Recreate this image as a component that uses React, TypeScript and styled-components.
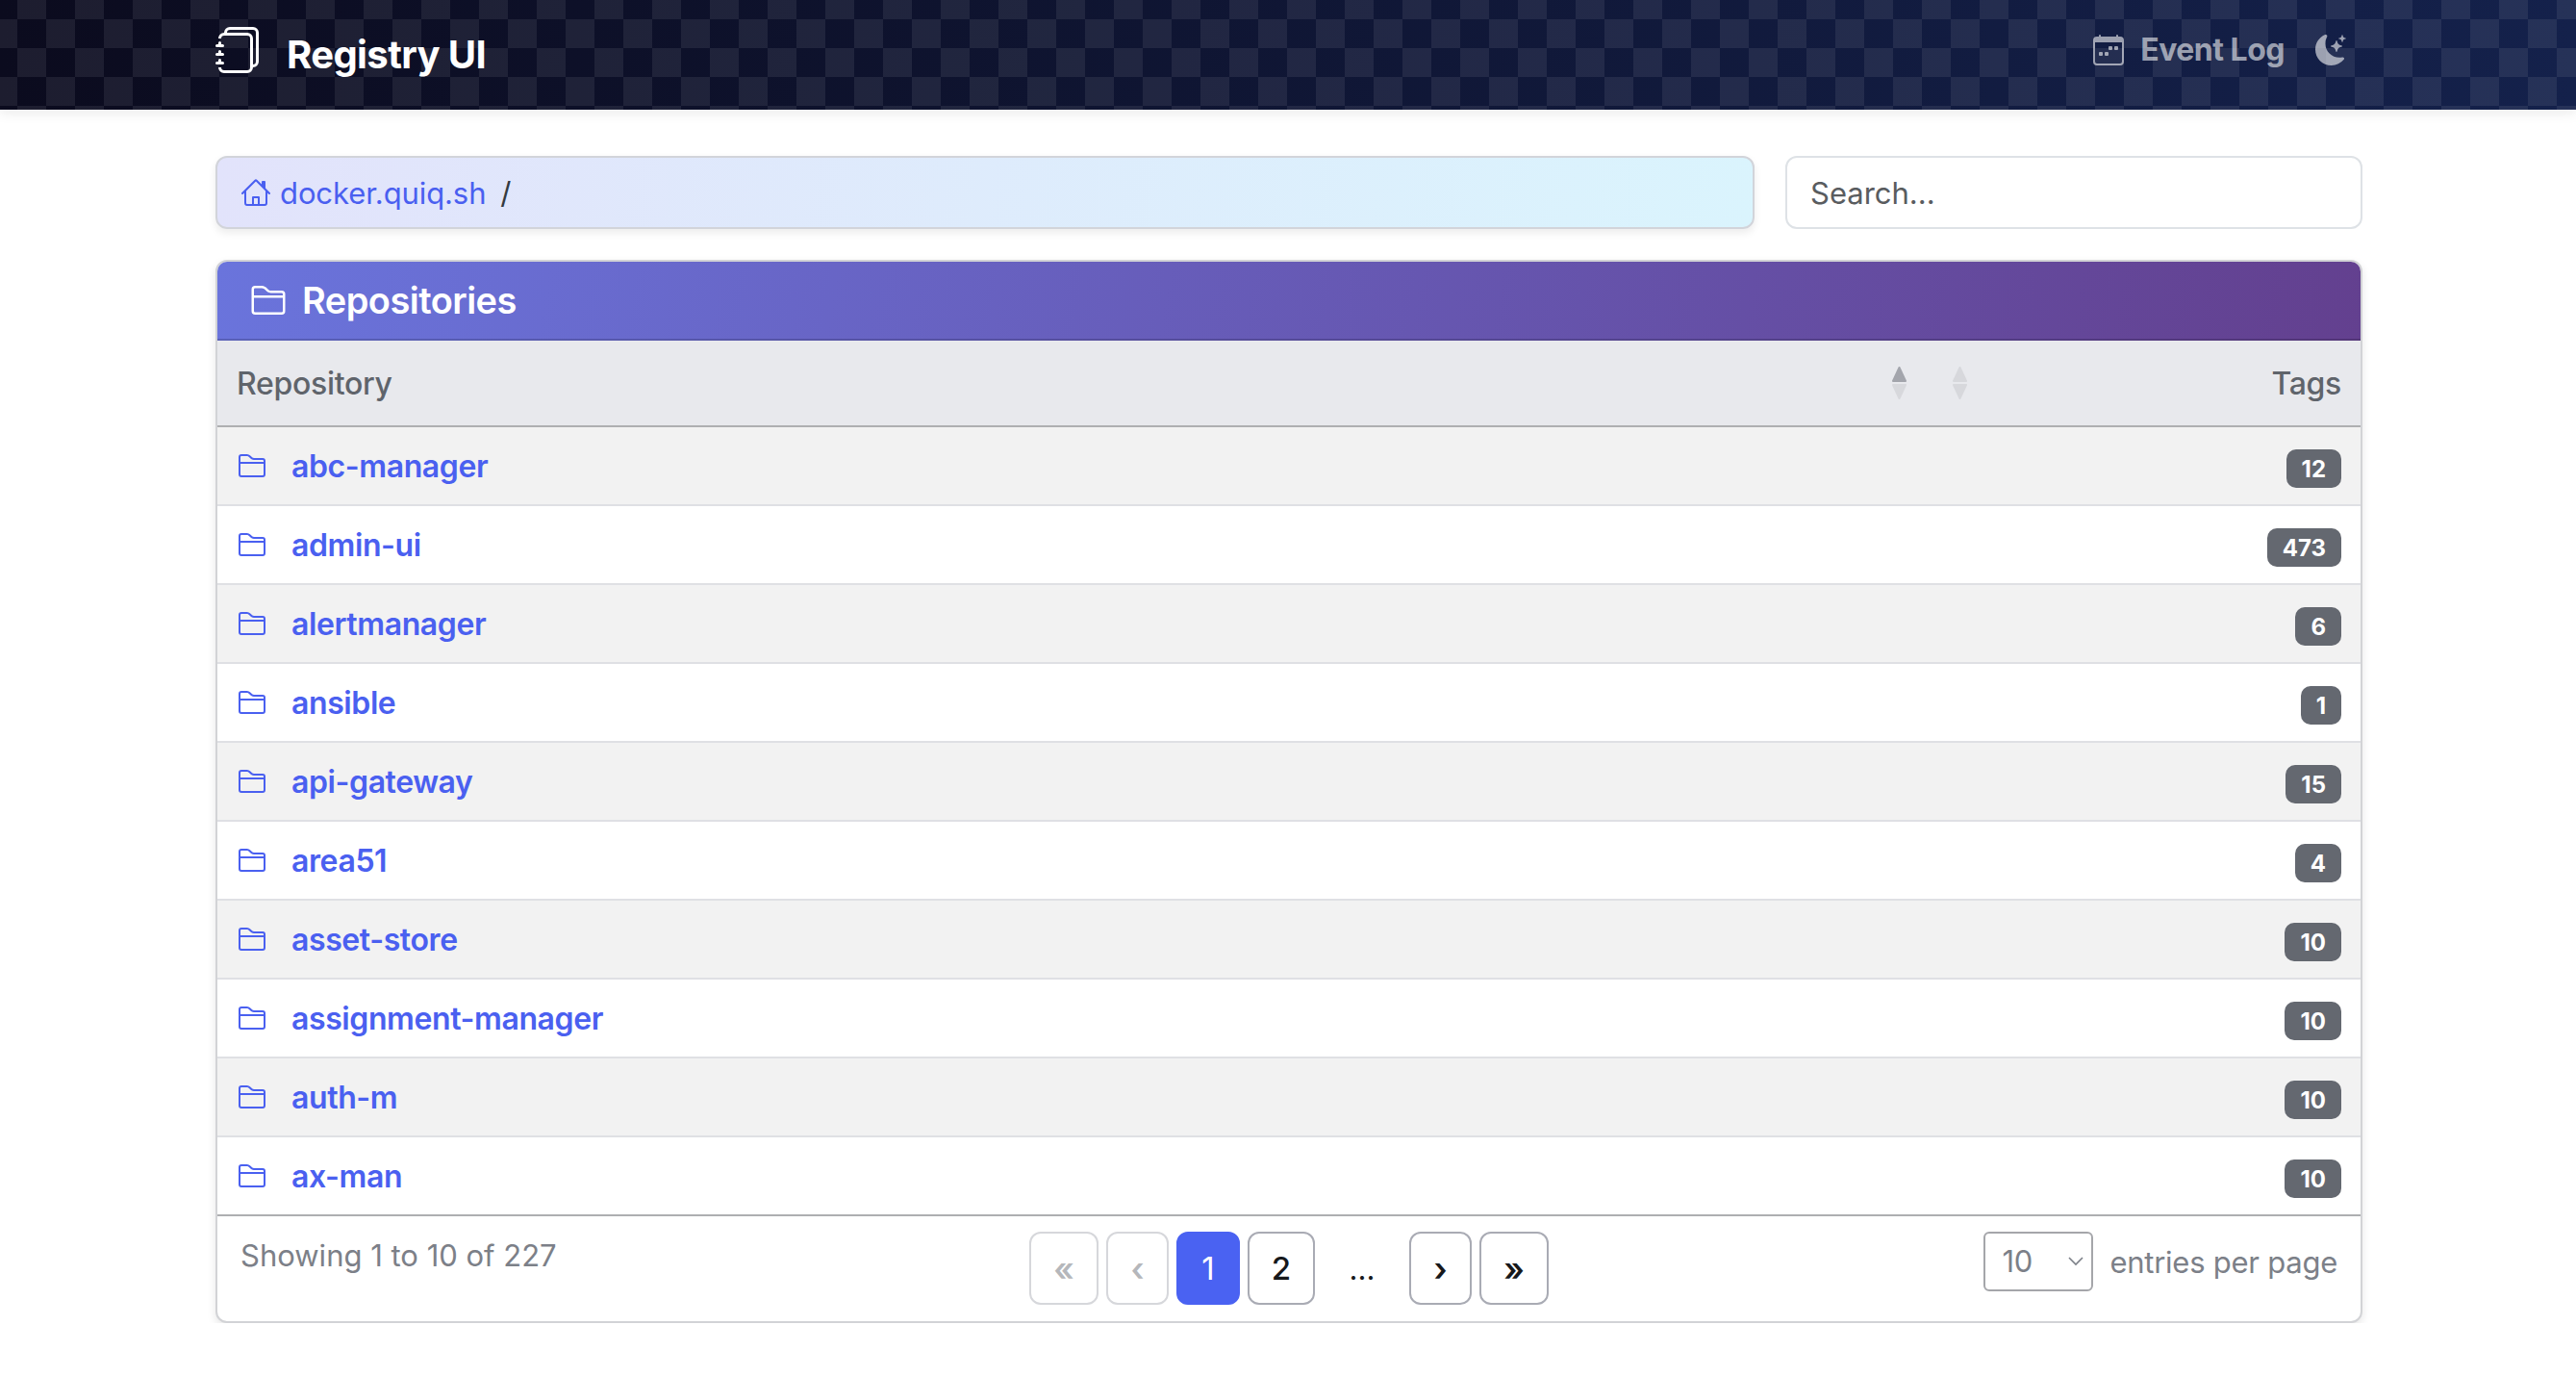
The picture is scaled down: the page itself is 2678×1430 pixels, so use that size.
import React from 'react';
import styled, { createGlobalStyle } from 'styled-components';

const REPOS: [string, number][] = [
  ['abc-manager', 12],
  ['admin-ui', 473],
  ['alertmanager', 6],
  ['ansible', 1],
  ['api-gateway', 15],
  ['area51', 4],
  ['asset-store', 10],
  ['assignment-manager', 10],
  ['auth-m', 10],
  ['ax-man', 10],
];

const GlobalStyle = createGlobalStyle`
  * { box-sizing: border-box; }
  html, body { margin: 0; padding: 0; background: #fff; }
  body { font-family: Inter, "Liberation Sans", sans-serif; font-size: 31px; color: #212529; }
`;

const TopBar = styled.header`
  height: 114px;
  display: flex;
  align-items: center;
  justify-content: space-between;
  padding: 0 239px 2px 224px;
  background-color: #0e1030;
  background-image:
    repeating-conic-gradient(rgba(255, 255, 255, 0.075) 0 25%, transparent 0 50%),
    linear-gradient(90deg, #0b0b1e, #14214b);
  background-size: 60px 60px, 100% 100%;
  background-position: -12px -10px, 0 0;
  box-shadow: 0 4px 12px rgba(0, 0, 0, 0.08);
`;

const Brand = styled.div`
  display: flex;
  align-items: center;
  gap: 26px;
  color: #fff;
  font-size: 40px;
  font-weight: 700;
  letter-spacing: -0.6px;
  svg { margin-bottom: 8px; }
`;

const NavLinks = styled.div`
  display: flex;
  align-items: center;
  gap: 32px;
  margin-bottom: 9px;
  color: rgba(255, 255, 255, 0.58);
  font-size: 32px;
  font-weight: 700;
  letter-spacing: -0.5px;
`;

const NavItem = styled.div`
  display: flex;
  align-items: center;
  gap: 17px;
`;

const Main = styled.main`
  width: 2232px;
  margin: 48px 0 0 224px;
`;

const TopRow = styled.div`
  display: flex;
  gap: 32px;
  margin-bottom: 32px;
`;

const Crumbs = styled.nav`
  width: 1600px;
  height: 76px;
  display: flex;
  align-items: center;
  padding: 0 24px;
  gap: 9px;
  border: 2px solid #d2d4da;
  border-radius: 12px;
  background: linear-gradient(100deg, #e2e3fb, #daf4fd);
  box-shadow: 0 4px 8px rgba(0, 0, 0, 0.08);
  color: #4a5ff0;
  letter-spacing: -0.1px;
`;

const Slash = styled.span`
  margin-left: 6px;
  color: #343a40;
`;

const Search = styled.input`
  width: 600px;
  height: 76px;
  padding: 0 24px;
  border: 2px solid #dee2e6;
  border-radius: 12px;
  font: inherit;
  color: #212529;
  &::placeholder { color: #595c5f; opacity: 1; }
`;

const Card = styled.section`
  border: 2px solid #d2d3d6;
  border-radius: 12px;
  box-shadow: 0 4px 10px rgba(0, 0, 0, 0.1);
  overflow: hidden;
  background: #fff;
`;

const CardTitle = styled.h2`
  height: 82px;
  margin: 0;
  display: flex;
  align-items: center;
  gap: 15px;
  padding: 0 24px 0 33px;
  color: #fff;
  font-size: 38px;
  font-weight: 600;
  letter-spacing: -0.55px;
  background: linear-gradient(100deg, #6a74dc, #63408f);
  border-bottom: 2px solid rgba(0, 0, 0, 0.16);
`;

const HeadRow = styled.div`
  height: 90px;
  display: grid;
  grid-template-columns: 1fr 63px 63px 365px;
  align-items: center;
  padding: 0 20px;
  background: #e8e9ed;
  border-bottom: 2px solid #aeafb1;
  color: #5f646b;
  font-size: 32px;
  font-weight: 500;
  letter-spacing: -0.3px;
`;

const TagsHead = styled.span`
  text-align: right;
`;

const Row = styled.div<{ $striped: boolean }>`
  height: 82px;
  display: flex;
  align-items: center;
  justify-content: space-between;
  padding: 0 20px;
  background: ${p => (p.$striped ? '#f2f2f2' : '#fff')};
  border-bottom: 2px solid #dfe0e4;
  &:last-of-type { border-bottom-color: #aeafb1; }
`;

const RepoLink = styled.a`
  display: flex;
  align-items: center;
  gap: 25px;
  color: #4a60f0;
  font-size: 32px;
  font-weight: 600;
  letter-spacing: -0.4px;
`;

const Badge = styled.span`
  height: 40px;
  padding: 0 16px;
  margin-top: 6px;
  display: flex;
  align-items: center;
  border-radius: 10px;
  background: #646870;
  color: #fff;
  font-size: 24px;
  font-weight: 700;
`;

const Footer = styled.footer`
  height: 109px;
  display: grid;
  grid-template-columns: 1fr auto 1fr;
  padding: 16px 24px 0 24px;
  color: #7c8088;
`;

const Showing = styled.div`
  line-height: 50px;
`;

const Pager = styled.div`
  display: flex;
  gap: 8px;
  align-items: flex-start;
`;

const PageButton = styled.button<{ $state?: 'active' | 'disabled'; $width: number }>`
  width: ${p => p.$width}px;
  height: 76px;
  padding: 0;
  border-radius: 12px;
  font: inherit;
  font-size: 33px;
  font-weight: ${p => (p.$state === 'active' ? 400 : 500)};
  color: ${p => (p.$state === 'active' ? '#fff' : p.$state === 'disabled' ? '#b5b7bb' : '#16181b')};
  background: ${p => (p.$state === 'active' ? '#4a62f2' : '#fff')};
  border: 2px solid ${p => (p.$state === 'active' ? '#4a62f2' : p.$state === 'disabled' ? '#d6d7db' : '#a9abb4')};
`;

const ArrowGlyph = styled.span`
  font-size: 34px;
  font-weight: 600;
`;

const Ellipsis = styled.span`
  width: 82px;
  height: 76px;
  display: flex;
  align-items: center;
  justify-content: center;
  color: #16181b;
`;

const PerPage = styled.div`
  display: flex;
  justify-content: flex-end;
  align-items: flex-start;
  gap: 17px;
  line-height: 64px;
  letter-spacing: -0.25px;
`;

const SelectBox = styled.div`
  width: 114px;
  height: 62px;
  padding: 0 7px 0 17px;
  display: flex;
  align-items: center;
  justify-content: space-between;
  border: 2px solid #a5a6aa;
  border-radius: 6px;
`;

const Caret = styled.svg`
  width: 18px;
  height: 12px;
  fill: none;
  stroke: #7c8088;
  stroke-width: 1.6;
`;

const SortIcon = styled.svg<{ $active?: boolean }>`
  width: 17px;
  height: 36px;
  justify-self: center;
  color: ${p => (p.$active ? '#a3a5ac' : '#d7d8dc')};
`;

const SortArrow = styled.path`
  stroke-width: 2;
  stroke-linejoin: round;
`;

const Glyph = styled.svg<{ $size: number }>`
  width: ${p => p.$size}px;
  height: ${p => p.$size}px;
  flex: none;
`;

const FolderIcon = ({ size }: { size: number }) => (
  <Glyph $size={size} viewBox="0 0 16 16" fill="currentColor">
    <path d="M1 3.5A1.5 1.5 0 0 1 2.5 2h2.764c.958 0 1.76.56 2.311 1.184C7.985 3.648 8.48 4 9 4h4.5A1.5 1.5 0 0 1 15 5.5v7a1.5 1.5 0 0 1-1.5 1.5h-11A1.5 1.5 0 0 1 1 12.5v-9zM2.5 3a.5.5 0 0 0-.5.5V6h12v-.5a.5.5 0 0 0-.5-.5H9c-.964 0-1.71-.629-2.174-1.154C6.374 3.334 5.82 3 5.264 3H2.5zM14 7H2v5.5a.5.5 0 0 0 .5.5h11a.5.5 0 0 0 .5-.5V7z" />
  </Glyph>
);

const HomeIcon = () => (
  <Glyph $size={32} viewBox="0 0 16 16" fill="currentColor">
    <path d="M8.707 1.5a1 1 0 0 0-1.414 0L.646 8.146a.5.5 0 0 0 .708.708L2 8.207V13.5A1.5 1.5 0 0 0 3.5 15h9a1.5 1.5 0 0 0 1.5-1.5V8.207l.646.647a.5.5 0 0 0 .708-.708L13 5.793V2.5a.5.5 0 0 0-.5-.5h-1a.5.5 0 0 0-.5.5v1.293L8.707 1.5ZM13 7.207V13.5a.5.5 0 0 1-.5.5h-9a.5.5 0 0 1-.5-.5V7.207l5-5 5 5Z" />
    <path d="M6 14v-3.5a.5.5 0 0 1 .5-.5h3a.5.5 0 0 1 .5.5V14h-1v-3H7v3H6Z" />
  </Glyph>
);

const JournalsIcon = () => (
  <Glyph $size={48} viewBox="0 0 16 16" fill="currentColor">
    <path d="M5 0h8a2 2 0 0 1 2 2v10a2 2 0 0 1-2 2 2 2 0 0 1-2 2H3a2 2 0 0 1-2-2h1a1 1 0 0 0 1 1h8a1 1 0 0 0 1-1V4a1 1 0 0 0-1-1H3a1 1 0 0 0-1 1H1a2 2 0 0 1 2-2h8a2 2 0 0 1 2 2v9a1 1 0 0 0 1-1V2a1 1 0 0 0-1-1H5a1 1 0 0 0-1 1H3a2 2 0 0 1 2-2z" />
    <path d="M1 6v-.5a.5.5 0 0 1 1 0V6h.5a.5.5 0 0 1 0 1h-2a.5.5 0 0 1 0-1H1zm0 3v-.5a.5.5 0 0 1 1 0V9h.5a.5.5 0 0 1 0 1h-2a.5.5 0 0 1 0-1H1zm0 2.5v.5H.5a.5.5 0 0 0 0 1h2a.5.5 0 0 0 0-1H2v-.5a.5.5 0 0 0-1 0z" />
  </Glyph>
);

const CalendarIcon = () => (
  <Glyph $size={32} viewBox="0 0 16 16" fill="currentColor">
    <path d="M11 6.5a.5.5 0 0 1 .5-.5h1a.5.5 0 0 1 .5.5v1a.5.5 0 0 1-.5.5h-1a.5.5 0 0 1-.5-.5v-1zm-3 0a.5.5 0 0 1 .5-.5h1a.5.5 0 0 1 .5.5v1a.5.5 0 0 1-.5.5h-1a.5.5 0 0 1-.5-.5v-1zm-5 3a.5.5 0 0 1 .5-.5h1a.5.5 0 0 1 .5.5v1a.5.5 0 0 1-.5.5h-1a.5.5 0 0 1-.5-.5v-1zm3 0a.5.5 0 0 1 .5-.5h1a.5.5 0 0 1 .5.5v1a.5.5 0 0 1-.5.5h-1a.5.5 0 0 1-.5-.5v-1z" />
    <path d="M3.5 0a.5.5 0 0 1 .5.5V1h8V.5a.5.5 0 0 1 1 0V1h1a2 2 0 0 1 2 2v11a2 2 0 0 1-2 2H2a2 2 0 0 1-2-2V3a2 2 0 0 1 2-2h1V.5a.5.5 0 0 1 .5-.5zM1 4v10a1 1 0 0 0 1 1h12a1 1 0 0 0 1-1V4H1z" />
  </Glyph>
);

const MoonIcon = () => (
  <Glyph $size={32} viewBox="0 0 16 16" fill="currentColor">
    <path d="M6 .278a.768.768 0 0 1 .08.858 7.208 7.208 0 0 0-.878 3.46c0 4.021 3.278 7.277 7.318 7.277.527 0 1.04-.055 1.533-.16a.787.787 0 0 1 .81.316.733.733 0 0 1-.031.893A8.349 8.349 0 0 1 8.344 16C3.734 16 0 12.286 0 7.71 0 4.266 2.114 1.312 5.124.06A.752.752 0 0 1 6 .278z" />
    <path d="M10.794 3.148a.217.217 0 0 1 .412 0l.387 1.162c.173.518.579.924 1.097 1.097l1.162.387a.217.217 0 0 1 0 .412l-1.162.387a1.734 1.734 0 0 0-1.097 1.097l-.387 1.162a.217.217 0 0 1-.412 0l-.387-1.162A1.734 1.734 0 0 0 9.31 6.593l-1.162-.387a.217.217 0 0 1 0-.412l1.162-.387a1.734 1.734 0 0 0 1.097-1.097l.387-1.162zM13.863.099a.145.145 0 0 1 .274 0l.258.774c.115.346.386.617.732.732l.774.258a.145.145 0 0 1 0 .274l-.774.258a1.156 1.156 0 0 0-.732.732l-.258.774a.145.145 0 0 1-.274 0l-.258-.774a1.156 1.156 0 0 0-.732-.732l-.774-.258a.145.145 0 0 1 0-.274l.774-.258c.346-.115.617-.386.732-.732L13.863.1z" />
  </Glyph>
);

const Sort = ({ up }: { up?: boolean }) => (
  <SortIcon $active={up} viewBox="0 0 17 36">
    <SortArrow d="M8.5 2 L15 16 H2 Z" fill="currentColor" stroke="currentColor" />
    <SortArrow d="M8.5 34 L15 20 H2 Z" fill="#d7d8dc" stroke="#d7d8dc" />
  </SortIcon>
);

export default function App() {
  return (
    <>
      <GlobalStyle />
      <TopBar>
        <Brand>
          <JournalsIcon />
          Registry UI
        </Brand>
        <NavLinks>
          <NavItem>
            <CalendarIcon />
            Event Log
          </NavItem>
          <MoonIcon />
        </NavLinks>
      </TopBar>
      <Main>
        <TopRow>
          <Crumbs>
            <HomeIcon />
            docker.quiq.sh
            <Slash>/</Slash>
          </Crumbs>
          <Search placeholder="Search..." />
        </TopRow>
        <Card>
          <CardTitle>
            <FolderIcon size={40} />
            Repositories
          </CardTitle>
          <HeadRow>
            <span>Repository</span>
            <Sort up />
            <Sort />
            <TagsHead>Tags</TagsHead>
          </HeadRow>
          {REPOS.map(([name, tags], i) => (
            <Row key={name} $striped={i % 2 === 0}>
              <RepoLink>
                <FolderIcon size={32} />
                {name}
              </RepoLink>
              <Badge>{tags}</Badge>
            </Row>
          ))}
          <Footer>
            <Showing>Showing 1 to 10 of 227</Showing>
            <Pager>
              <PageButton $state="disabled" $width={72}><ArrowGlyph>«</ArrowGlyph></PageButton>
              <PageButton $state="disabled" $width={65}><ArrowGlyph>‹</ArrowGlyph></PageButton>
              <PageButton $state="active" $width={66}>1</PageButton>
              <PageButton $width={70}>2</PageButton>
              <Ellipsis>...</Ellipsis>
              <PageButton $width={65}><ArrowGlyph>›</ArrowGlyph></PageButton>
              <PageButton $width={72}><ArrowGlyph>»</ArrowGlyph></PageButton>
            </Pager>
            <PerPage>
              <SelectBox>
                10
                <Caret viewBox="0 0 18 12">
                  <path d="M2 2 L9 9 L16 2" />
                </Caret>
              </SelectBox>
              entries per page
            </PerPage>
          </Footer>
        </Card>
      </Main>
    </>
  );
}
